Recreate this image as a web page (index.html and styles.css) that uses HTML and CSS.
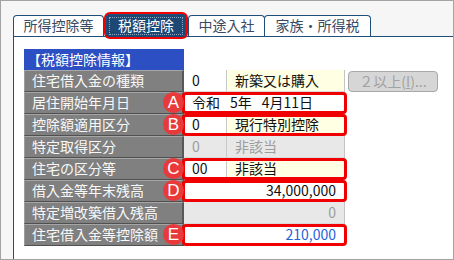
FILE: index.html
```html
<!DOCTYPE html>
<html lang="ja">
<head>
  <meta charset="UTF-8">
  <title>税額控除</title>
  <link rel="stylesheet" href="styles.css">
</head>
<body>
  <div class="screen">
    <div class="tabs">
      <div class="tab tab-first">所得控除等</div>
      <div class="tab tab-active">税額控除</div>
      <div class="tab tab-third">中途入社</div>
      <div class="tab tab-last">家族・所得税</div>
    </div>
    <div class="panel">
      <div class="grid">
        <div class="title">【税額控除情報】</div>

        <div class="row">
          <div class="label">住宅借入金の種類</div>
          <div class="values">
            <div class="cell code">0</div>
            <div class="cell name yellow">新築又は購入</div>
          </div>
          <button class="more" disabled>２以上(<u>I</u>)...</button>
        </div>

        <div class="row">
          <div class="label">居住開始年月日</div>
          <span class="badge">A</span>
          <div class="values mark">
            <div class="cell full">令和<span class="gap">5年</span><span class="gap">4月11日</span></div>
          </div>
        </div>

        <div class="row">
          <div class="label">控除額適用区分</div>
          <span class="badge">B</span>
          <div class="values mark">
            <div class="cell code">0</div>
            <div class="cell name yellow">現行特別控除</div>
          </div>
        </div>

        <div class="row">
          <div class="label">特定取得区分</div>
          <div class="values">
            <div class="cell code off">0</div>
            <div class="cell name off">非該当</div>
          </div>
        </div>

        <div class="row">
          <div class="label">住宅の区分等</div>
          <span class="badge">C</span>
          <div class="values mark">
            <div class="cell code">00</div>
            <div class="cell name yellow">非該当</div>
          </div>
        </div>

        <div class="row">
          <div class="label">借入金等年末残高</div>
          <span class="badge">D</span>
          <div class="values mark">
            <div class="cell full num">34,000,000</div>
          </div>
        </div>

        <div class="row">
          <div class="label">特定増改築借入残高</div>
          <div class="values">
            <div class="cell full num off">0</div>
          </div>
        </div>

        <div class="row">
          <div class="label">住宅借入金等控除額</div>
          <span class="badge">E</span>
          <div class="values mark">
            <div class="cell full num blue">210,000</div>
          </div>
        </div>
      </div>
    </div>
  </div>
</body>
</html>
```

FILE: styles.css
```css
body {
  margin: 0;
  font-family: "Noto Sans CJK JP", "Noto Sans", sans-serif;
  font-size: 14px;
}
.screen {
  width: 454px;
  height: 260px;
  box-sizing: border-box;
  border: 1px solid #a3a3a3;
  background: #f6f6f6;
  padding: 13px 0 0 12px;
  overflow: hidden;
}

/* Tabs */
.tabs {
  display: flex;
  align-items: flex-end;
  height: 22px;
}
.tab {
  height: 21px;
  box-sizing: border-box;
  border: 1px solid #1f4e79;
  border-bottom: none;
  border-radius: 4px 4px 0 0;
  background: #fff;
  color: #3a4a62;
  line-height: 19px;
  text-align: center;
}
.tab-first {
  width: 91px;
}
.tab-active {
  position: relative;
  z-index: 2;
  width: 80px;
  height: 23px;
  margin: 0 2px -1px 2px;
  background: #1d4874;
  color: #fff;
  line-height: 21px;
  border-radius: 4px;
  box-shadow: 0 0 0 2px #f00000;
}
.tab-active::before {
  content: "";
  position: absolute;
  inset: 2px;
  border: 1px dotted #8fa6c0;
}
.tab-third {
  width: 77px;
}
.tab-last {
  width: 107px;
  margin-left: -1px;
}

/* Panel */
.panel {
  border-top: 1px solid #1f4e79;
  border-left: 1px solid #1f4e79;
  background: #fff;
  height: 240px;
  padding: 12px 0 0 10px;
}
.title {
  width: 160px;
  height: 21px;
  box-sizing: border-box;
  background: #2c4fc4;
  color: #fff;
  line-height: 20px;
  padding-left: 3px;
}
.row {
  position: relative;
  display: flex;
  height: 22px;
}
.label {
  width: 160px;
  box-sizing: border-box;
  background: #808080;
  color: #f8f8f8;
  border-top: 1px solid #a6a6a6;
  border-bottom: 1px solid #505050;
  border-left: 1px solid #9c9c9c;
  border-right: 2px solid #585858;
  padding-left: 7px;
  line-height: 19px;
  white-space: nowrap;
}
.values {
  position: relative;
  display: flex;
  width: 160px;
  border-right: 1px solid #c4c4c4;
}
.mark::after {
  content: "";
  position: absolute;
  top: 0;
  bottom: 0;
  left: -2px;
  right: -3px;
  border: 3px solid #f00000;
  border-radius: 4px;
}
.cell {
  height: 22px;
  box-sizing: border-box;
  border-bottom: 1px solid #dadada;
  background: #fff;
  color: #111;
  line-height: 21px;
  padding: 0 8px;
  white-space: nowrap;
}
.code {
  width: 43px;
  border-right: 1px solid #c8c8c8;
}
.name {
  flex: 1;
}
.full {
  flex: 1;
}
.num {
  text-align: right;
}
.yellow {
  background: #ffffe3;
}
.off {
  background: #e8e8e8;
  color: #9c9c9c;
}
.blue {
  color: #1f63d8;
}
.gap {
  margin-left: 10px;
}
.badge {
  position: absolute;
  z-index: 3;
  left: 139px;
  top: 0;
  width: 21px;
  height: 21px;
  border-radius: 50%;
  background: #e8393b;
  color: #fff;
  font-family: "Liberation Sans", Arial, sans-serif;
  font-size: 17px;
  line-height: 21px;
  text-align: center;
}
.more {
  margin: 1px 0 0 3px;
  width: 90px;
  height: 21px;
  border: 1px solid #a8a8a8;
  border-radius: 4px;
  background: #d6d6d6;
  color: #a2a2a2;
  font-family: "Noto Sans CJK JP", sans-serif;
  font-size: 14px;
  line-height: 17px;
  padding: 0;
}
```
